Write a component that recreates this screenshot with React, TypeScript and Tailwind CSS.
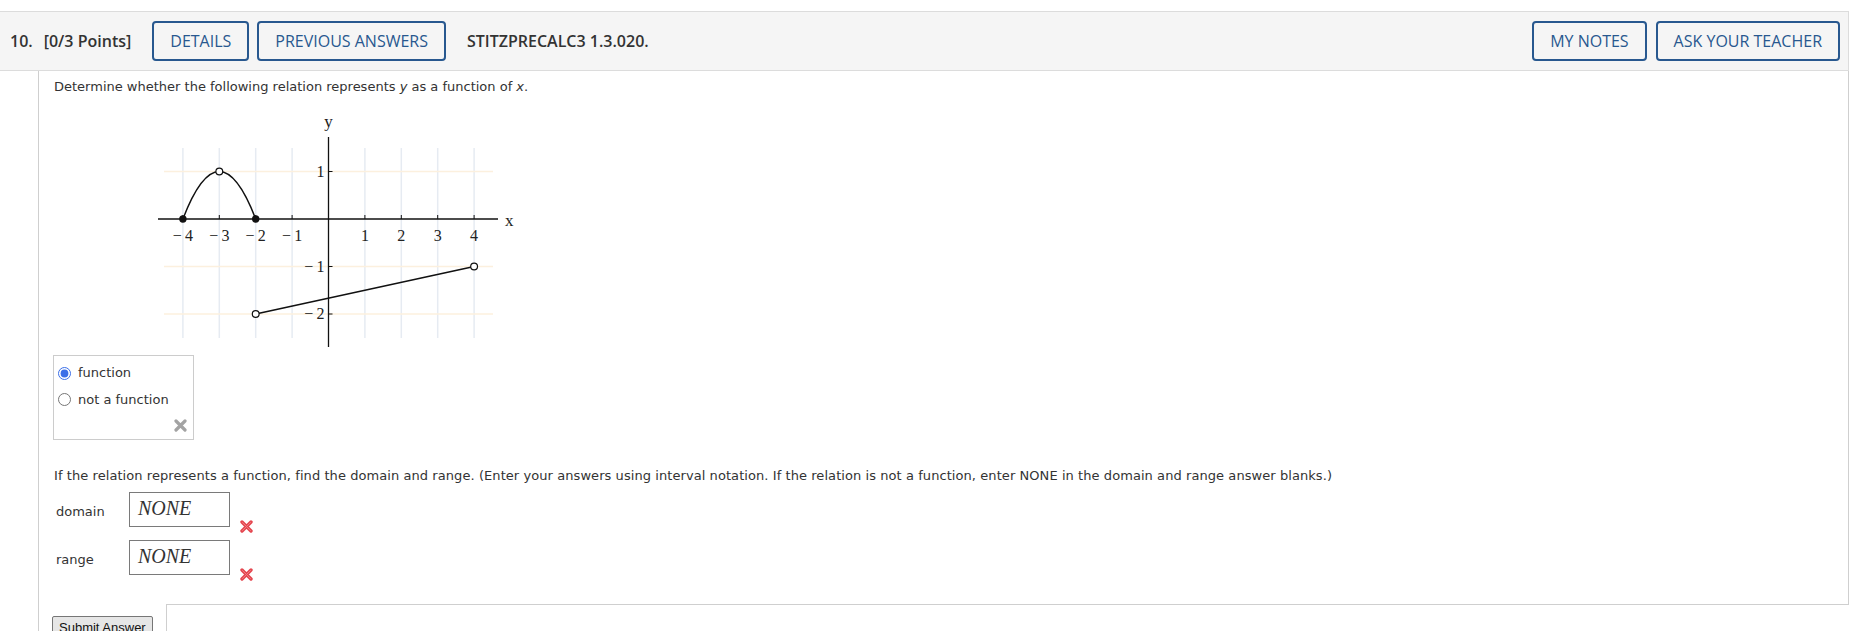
import { Fragment } from 'react'

// graph scale, in svg px
const UX = 36.4
const UY = 47.5
const OX = 178.5
const OY = 109
const px = (x: number) => OX + x * UX
const py = (y: number) => OY - y * UY

function Graph() {
  const xs = [-4, -3, -2, -1, 1, 2, 3, 4]
  const ys = [1, -1, -2]
  return (
    <svg width="370" height="245" viewBox="0 0 370 245" className="block" fontFamily="'Liberation Serif', 'DejaVu Serif', serif" fontSize="16" fill="#222">
      {xs.map((k) => (
        <line key={'gv' + k} x1={px(k)} x2={px(k)} y1={38} y2={228} stroke="#e6ebf2" strokeWidth="1.5" />
      ))}
      {ys.map((k) => (
        <line key={'gh' + k} x1={14} x2={343} y1={py(k)} y2={py(k)} stroke="#fcf0de" strokeWidth="1.5" />
      ))}
      <line x1={8} x2={348} y1={OY} y2={OY} stroke="#111" strokeWidth="1.3" />
      <line x1={OX} x2={OX} y1={27} y2={237} stroke="#111" strokeWidth="1.3" />
      {xs.map((k) => (
        <line key={'tx' + k} x1={px(k)} x2={px(k)} y1={OY - 4} y2={OY} stroke="#111" strokeWidth="1" />
      ))}
      {ys.map((k) => (
        <line key={'ty' + k} x1={OX} x2={OX + 4} y1={py(k)} y2={py(k)} stroke="#111" strokeWidth="1" />
      ))}
      {xs.map((k) => (
        <text key={'lx' + k} x={px(k)} y={131} textAnchor="middle">
          {k < 0 ? '\u2212\u2009' + -k : k}
        </text>
      ))}
      {ys.map((k) => (
        <text key={'ly' + k} x={OX - 4} y={py(k) + 5} textAnchor="end">
          {k < 0 ? '\u2212\u2009' + -k : k}
        </text>
      ))}
      <text x={OX} y={17} textAnchor="middle" fontSize="17">y</text>
      <text x={355} y={116} fontSize="17">x</text>

      <path
        d={`M ${px(-4)} ${py(0)} Q ${px(-3)} ${py(2)} ${px(-2)} ${py(0)}`}
        fill="none"
        stroke="#111"
        strokeWidth="1.5"
      />
      <line x1={px(-2)} y1={py(-2)} x2={px(4)} y2={py(-1)} stroke="#111" strokeWidth="1.5" />

      <circle cx={px(-4)} cy={py(0)} r="3.7" fill="#111" />
      <circle cx={px(-2)} cy={py(0)} r="3.7" fill="#111" />
      {[
        [-3, 1],
        [-2, -2],
        [4, -1],
      ].map(([x, y]) => (
        <Fragment key={x + ':' + y}>
          <circle cx={px(x)} cy={py(y)} r="3.4" fill="#fff" stroke="#111" strokeWidth="1.2" />
        </Fragment>
      ))}
    </svg>
  )
}

function GrayX() {
  return (
    <svg width="13" height="13" viewBox="0 0 13 13">
      <path d="M2 2 L11 11 M11 2 L2 11" stroke="#a3a3a3" strokeWidth="3.2" strokeLinecap="round" />
    </svg>
  )
}

function RedX() {
  return (
    <svg width="13" height="13" viewBox="0 0 13 13">
      <path d="M2 2 L11 11 M11 2 L2 11" stroke="#e4464f" strokeWidth="3.4" strokeLinecap="round" />
      <path d="M2.5 2.5 L10.5 10.5 M10.5 2.5 L2.5 10.5" stroke="#f07a80" strokeWidth="1" strokeLinecap="round" />
    </svg>
  )
}

function AnswerRow({ label, value }: { label: string; value: string }) {
  return (
    <div className="flex items-start h-[35px]">
      <div className="w-[75px] pl-[2px] mt-[12px] leading-4">{label}</div>
      <div className="w-[101px] h-[35px] border border-[#7a7a7a] pl-[8px] pt-[4px] leading-[23px] text-[20px] italic text-[#333] font-['Liberation_Serif',serif]">
        {value}
      </div>
      <div className="ml-[10px] mt-[28px]">
        <RedX />
      </div>
    </div>
  )
}

function HeaderButton({ children }: { children: string }) {
  return (
    <button className="h-[40px] px-4 border-2 border-[#28588f] rounded-[4px] text-[16px] text-[#28588f] bg-[#f5f5f5] leading-none">
      {children}
    </button>
  )
}

export default function App() {
  return (
    <div className="w-[1852px] h-[631px] overflow-hidden bg-white pt-[11px] text-[#333]">
      <header className="w-[1849px] h-[60px] flex items-center border-y border-r border-[#dcdcdc] bg-[#f5f5f5] pl-[10px] pr-[8px] font-['Open_Sans',sans-serif]">
        <span className="text-[16px] font-semibold text-[#333]">10.</span>
        <span className="ml-[11px] text-[16px] font-semibold text-[#333]">[0/3 Points]</span>
        <div className="ml-[21px] flex gap-[8px]">
          <HeaderButton>DETAILS</HeaderButton>
          <HeaderButton>PREVIOUS ANSWERS</HeaderButton>
        </div>
        <span className="ml-[21px] text-[16px] font-semibold text-[#333]">STITZPRECALC3 1.3.020.</span>
        <div className="ml-auto flex gap-[9px]">
          <HeaderButton>MY NOTES</HeaderButton>
          <HeaderButton>ASK YOUR TEACHER</HeaderButton>
        </div>
      </header>

      <div className="ml-[38px] w-[1811px] border-l border-[#cfcfcf] font-['DejaVu_Sans',Verdana,sans-serif] text-[13px] text-[#333]">
        <div className="border-r border-[#cfcfcf] pl-[15px] pt-[8px] pb-[29px]">
          <p className="leading-4">
            Determine whether the following relation represents <i>y</i> as a function of <i>x</i>.
          </p>
          <div className="mt-[15px] ml-[96px]">
            <Graph />
          </div>
          <div className="ml-[-1px] w-[141px] h-[85px] border border-[#cccccc] pt-[4px] flex flex-col">
            <label className="h-[27px] flex items-center">
              <input type="radio" name="rel" defaultChecked className="m-0 ml-[4px] w-[13px] h-[13px] accent-[#3b6fe8]" />
              <span className="ml-[7px]">function</span>
            </label>
            <label className="h-[27px] flex items-center">
              <input type="radio" name="rel" className="m-0 ml-[4px] w-[13px] h-[13px] accent-[#3b6fe8]" />
              <span className="ml-[7px]">not a function</span>
            </label>
            <div className="h-[27px] flex items-center justify-end pr-[6px]">
              <GrayX />
            </div>
          </div>
          <p className="mt-[28px] leading-4 tracking-[0.07px]">
            If the relation represents a function, find the domain and range. (Enter your answers using interval notation. If the relation is not a function, enter NONE in the domain and range answer blanks.)
          </p>
          <div className="mt-[8px]">
            <AnswerRow label="domain" value="NONE" />
          </div>
          <div className="mt-[13px]">
            <AnswerRow label="range" value="NONE" />
          </div>
        </div>
        <div className="flex items-start">
          <div className="w-[127px] pl-[13px] pt-[12px]">
            <button className="h-[22px] px-[6px] border border-[#767676] rounded-[2px] bg-[#e6e6e6] text-[13px] text-[#111] leading-none font-['Liberation_Sans',Arial,sans-serif]">
              Submit Answer
            </button>
          </div>
          <div className="flex-1 h-[30px] border-t border-l border-[#cfcfcf]" />
        </div>
      </div>
    </div>
  )
}
